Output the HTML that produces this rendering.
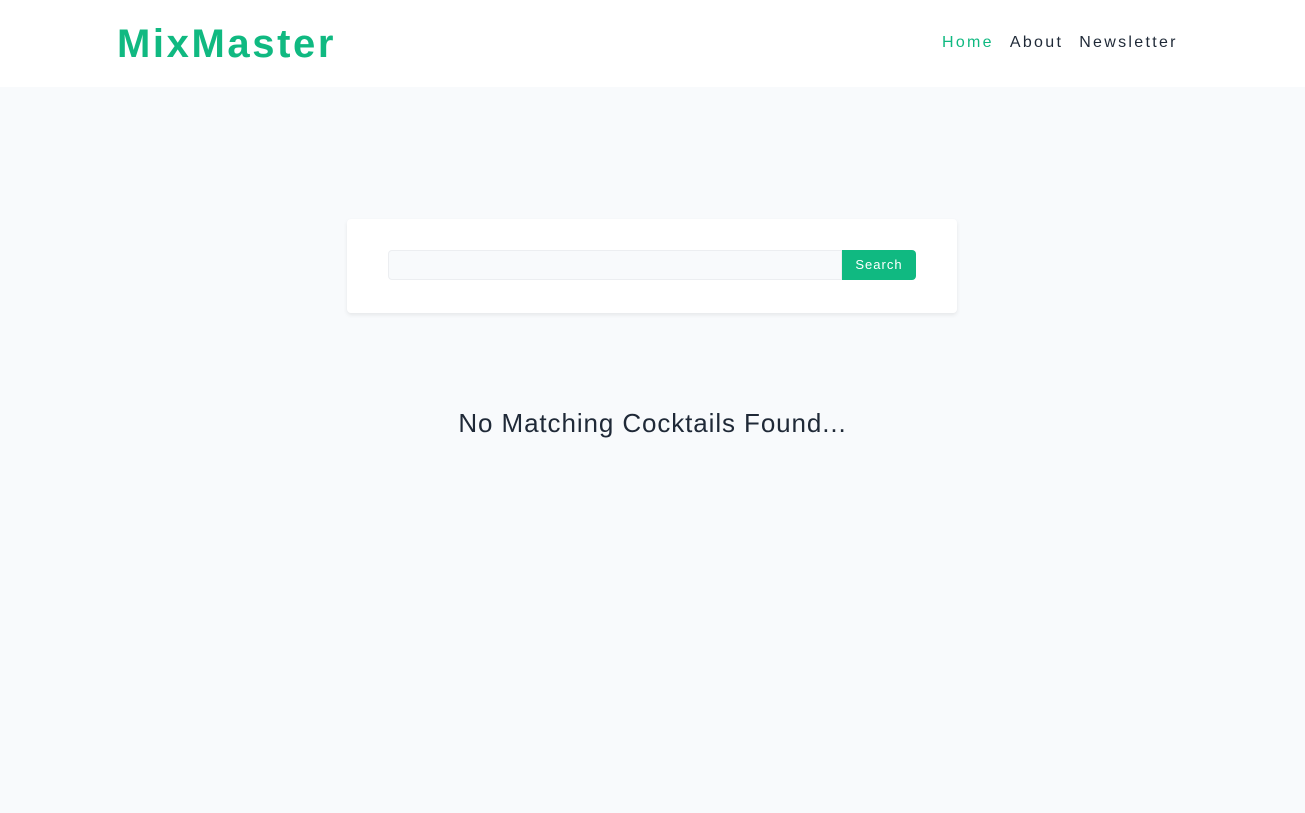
<!DOCTYPE html>
<html><head><style>
body{margin:0;width:1305px;height:813px;background:#f8fafc;font-family:"Liberation Sans",sans-serif;overflow:hidden}
nav{height:87px;background:#fff;position:relative}
.logo{position:absolute;left:117px;top:22px;font-size:40px;font-weight:bold;color:#10b981;letter-spacing:2.6px}
.links{position:absolute;top:34px;left:942px;font-size:16px;letter-spacing:2.3px;color:#1f2937;white-space:nowrap}
.links span{margin-right:16px}
.card{position:absolute;left:347px;top:219px;width:610px;height:94px;background:#fff;border-radius:4px;box-shadow:0 2px 4px rgba(0,0,0,.08)}
.inp{position:absolute;left:41px;top:31px;width:454px;height:30px;background:#f8fafc;border:1px solid #eceef1;border-radius:4px 0 0 4px;box-sizing:border-box}
.btn{position:absolute;left:495px;top:31px;width:74px;height:30px;background:#10b981;color:#fff;font-size:13px;letter-spacing:1px;text-align:center;line-height:30px;border-radius:0 4px 4px 0}
h2{position:absolute;top:408px;width:100%;text-align:center;margin:0;font-weight:normal;font-size:26px;letter-spacing:0.9px;color:#1f2937}
</style></head><body>
<nav><div class="logo">MixMaster</div><div class="links"><span style="color:#10b981">Home</span><span>About</span><span>Newsletter</span></div></nav>
<div class="card"><div class="inp"></div><div class="btn">Search</div></div>
<h2>No Matching Cocktails Found...</h2>
</body></html>
